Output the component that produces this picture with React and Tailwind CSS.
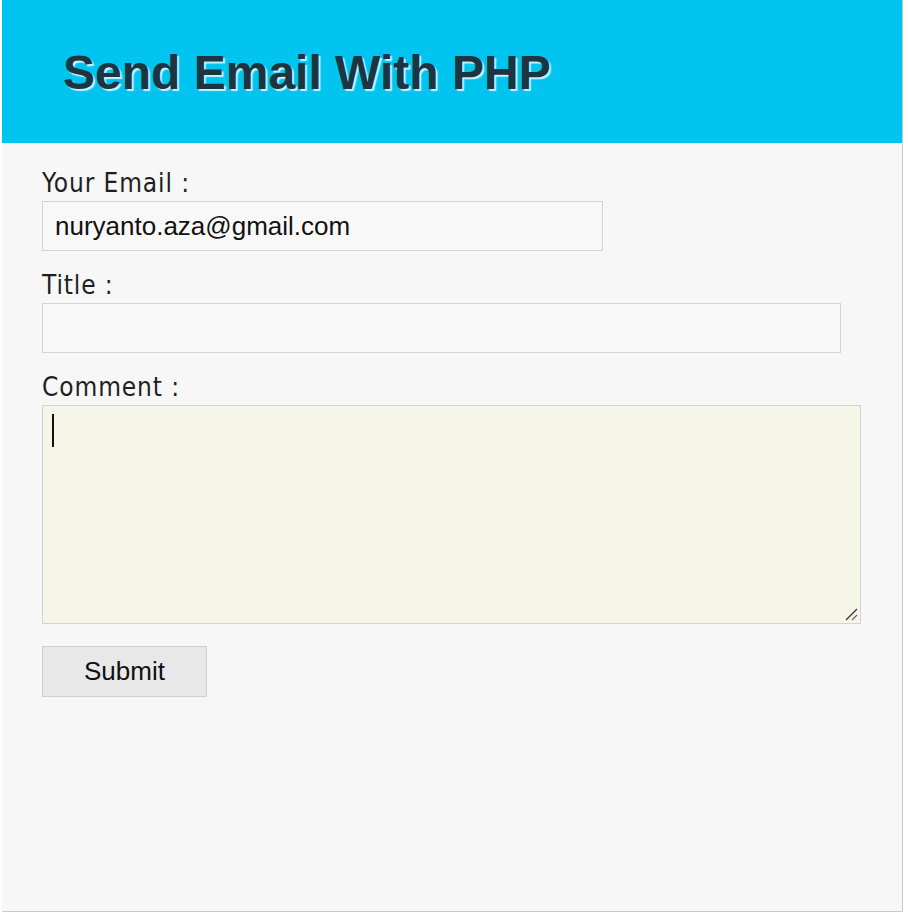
import React from "react";

export default function App() {
  const label = "block text-[26px] leading-[28px] tracking-[0.9px] text-[#1f1f1f] [font-family:'DejaVu_Sans_Condensed','DejaVu_Sans',sans-serif] [font-stretch:condensed]";
  return (
    <div className="w-[908px] h-[916px] bg-white">
      <div className="ml-[2px] w-[901px] h-[912px] bg-[#f7f7f7] border-r border-b border-[#c9c9c9] flex flex-col">
        <div className="h-[143px] bg-[#00c4f0] flex items-center pl-[61px] pt-[3px]">
          <h1 className="text-[48px] font-bold text-[#1e3440] [font-family:'Liberation_Sans',Arial,sans-serif] [text-shadow:2px_2px_1px_#c9f3ff]">
            Send Email With PHP
          </h1>
        </div>
        <div className="pl-[40px] pt-[26px] flex flex-col items-start">
          <span className={label}>Your Email :</span>
          <div className="mt-[4px] w-[561px] h-[50px] border border-[#d3d3d3] bg-[#f8f8f8] flex items-center pl-[12px] pt-[1px] text-[26px] text-[#111] [font-family:'Liberation_Sans',Arial,sans-serif]">
            nuryanto.aza@gmail.com
          </div>
          <span className={label + " mt-[20px]"}>Title :</span>
          <div className="mt-[4px] w-[799px] h-[50px] border border-[#d3d3d3] bg-[#f8f8f8]" />
          <span className={label + " mt-[20px]"}>Comment :</span>
          <div className="relative mt-[4px] w-[819px] h-[219px] border border-[#d3d3d3] bg-[#f5f5e8] pt-[8px] pl-[9px]">
            <div className="w-[2px] h-[33px] bg-[#111]" />
            <svg className="absolute right-[2px] bottom-[2px]" width="14" height="14" viewBox="0 0 14 14">
              <line x1="2" y1="13" x2="13" y2="2" stroke="#333" strokeWidth="1.3" />
              <line x1="8" y1="13" x2="13" y2="8" stroke="#666" strokeWidth="1.3" />
            </svg>
          </div>
          <button className="mt-[22px] w-[165px] h-[51px] border border-[#cfcfcf] bg-[#e8e8e8] text-[26px] text-[#111] [font-family:'Liberation_Sans',Arial,sans-serif]">
            Submit
          </button>
        </div>
      </div>
    </div>
  );
}
